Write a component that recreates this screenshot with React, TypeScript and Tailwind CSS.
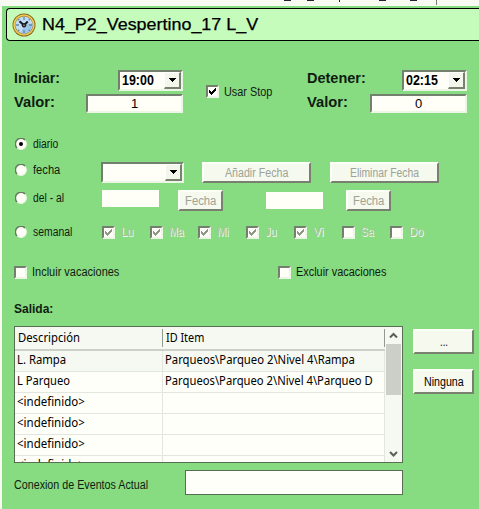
import { useLayoutEffect, useRef, useState } from "react";

/* Text condensed or widened to a given width. */
function Text({ children, width, className = "" }: { children: string; width: number; className?: string }) {
  const ref = useRef<HTMLSpanElement>(null);
  const [scale, setScale] = useState(1);
  useLayoutEffect(() => {
    if (ref.current) setScale(width / ref.current.offsetWidth);
  }, [children, width]);
  return (
    <span className={`block shrink-0 text-left ${className}`} style={{ width }}>
      <span ref={ref} className="inline-block origin-left whitespace-pre" style={{ transform: `scaleX(${scale})` }}>
        {children}
      </span>
    </span>
  );
}

const sunken =
  "border-t-2 border-l-2 border-b-2 border-r-2 border-t-[#74806e] border-l-[#74806e] border-b-[#ebf6e5] border-r-[#ebf6e5] bg-[#fffff8]";
const raised =
  "border-t-2 border-l-2 border-b-2 border-r-2 border-t-[#fbfff5] border-l-[#fbfff5] border-b-[#78806f] border-r-[#78806f] bg-[#f5f9ee]";

function Combo({ value, wide = false }: { value?: string; wide?: boolean }) {
  return (
    <div className={`flex h-[21px] shrink-0 items-stretch ${wide ? "w-[83px]" : "w-[65px]"} ${sunken}`}>
      <div className="flex flex-1 items-start pl-[2px] text-[14px] leading-4 font-bold text-black">
        {value && <Text width={32}>{value}</Text>}
      </div>
      <div className="flex w-[17px] items-center justify-center border-t border-r-2 border-b-2 border-l border-t-white border-r-[#78806f] border-b-[#78806f] border-l-white bg-[#f2f6eb]">
        <svg width="7" height="4" viewBox="0 0 7 4" shapeRendering="crispEdges">
          <path d="M0 0h7v1H6v1H5v1H4v1H3V3H2V2H1V1H0z" />
        </svg>
      </div>
    </div>
  );
}

function Check({ checked = false, disabled = false }: { checked?: boolean; disabled?: boolean }) {
  return (
    <div className={`flex size-[13px] shrink-0 items-center justify-center ${sunken}`}>
      {checked && (
        <svg width="9" height="9" viewBox="0 0 9 9" className={disabled ? "text-[#92998c]" : "text-black"} shapeRendering="crispEdges">
          <path d="M1 3h1v1h1v1h1V4h1V3h1V2h1V1h1v3H7v1H6v1H5v1H4v1H3V7H2V6H1z" fill="currentColor" />
        </svg>
      )}
    </div>
  );
}

function Radio({ label, width, checked = false, className = "" }: { label: string; width: number; checked?: boolean; className?: string }) {
  return (
    <div className={`flex w-[86px] shrink-0 items-center gap-[6px] ${className}`}>
      <svg width="12" height="12" viewBox="0 0 12 12" className="shrink-0">
        <circle cx="6" cy="6" r="5.3" fill="#fffff8" stroke="#eef8e9" strokeWidth="1.2" />
        <path d="M2 10A5.3 5.3 0 0 1 10 2" fill="none" stroke="#66785f" strokeWidth="1.5" />
        {checked && <circle cx="6" cy="6" r="2" />}
      </svg>
      <Text width={width} className="text-[12px] leading-4">{label}</Text>
    </div>
  );
}

function Button({ label, width, className }: { label: string; width: number; className: string }) {
  return (
    <button className={`flex shrink-0 items-center justify-center ${raised} ${className}`}>
      <Text width={width}>{label}</Text>
    </button>
  );
}

function Clock() {
  return (
    <svg width="24" height="24" viewBox="0 0 24 24" className="shrink-0">
      <circle cx="12" cy="12" r="11.5" fill="#8a671e" />
      <circle cx="12" cy="12" r="10.6" fill="#f0ce54" />
      <circle cx="12" cy="12" r="9.2" fill="#a3853b" />
      <circle cx="12" cy="12" r="8.6" fill="#c1ddf4" />
      <path d="M12 12 20.2 10A8.5 8.5 0 0 1 9 20z" fill="#9bc6eb" />
      <path d="M12 4v3m0 10v3M4 12h3m10 0h3M6.3 6.3l1 1m9.4 9.4 1 1m0-11.4-1 1m-9.4 9.4-1 1" stroke="#6286a7" strokeWidth="1.3" />
      <path d="M7.5 8.2 12 12.2l3.8-3.7" fill="none" stroke="#172130" strokeWidth="2.2" />
      <circle cx="12" cy="12.3" r="2.2" fill="#172130" />
      <circle cx="12" cy="12.3" r=".8" fill="#e9a344" />
    </svg>
  );
}

const days = [
  { name: "Lu", on: true, width: 12 },
  { name: "Ma", on: true, width: 15 },
  { name: "Mi", on: true, width: 12 },
  { name: "Ju", on: true, width: 12 },
  { name: "Vi", on: true, width: 10 },
  { name: "Sa", on: false, width: 13 },
  { name: "Do", on: false, width: 14 },
];

const rows = [
  { name: "L. Rampa", nameWidth: 49, id: "Parqueos\\Parqueo 2\\Nivel 4\\Rampa", idWidth: 190 },
  { name: "L Parqueo", nameWidth: 53, id: "Parqueos\\Parqueo 2\\Nivel 4\\Parqueo D", idWidth: 208 },
  { name: "<indefinido>", nameWidth: 68 },
  { name: "<indefinido>", nameWidth: 68 },
  { name: "<indefinido>", nameWidth: 68 },
  { name: "<indefinido>", nameWidth: 68 },
];

function ValueGroup({ title, titleWidth, time, value, className }: { title: string; titleWidth: number; time: string; value: string; className: string }) {
  return (
    <div className={`shrink-0 ${className}`}>
      <div className="flex h-6 justify-between">
        <Text width={titleWidth} className="-mt-px text-[14px] leading-[18px] font-bold">{title}</Text>
        <Combo value={time} />
      </div>
      <div className="flex h-[19px] justify-between">
        <Text width={41} className="-mt-px text-[14px] leading-[18px] font-bold">Valor:</Text>
        <div className={`flex w-[97px] items-center justify-center text-[13px] leading-4 text-black ${sunken}`}>{value}</div>
      </div>
    </div>
  );
}

export default function App() {
  return (
    <div className="flex h-[509px] w-[479px] flex-col overflow-hidden bg-[#f9faf2] pl-[2px] font-['Liberation_Sans',Arial,sans-serif] text-[12px] leading-4 text-[#101c10]">
      <div className="flex h-[6px] shrink-0 items-start">
        <div className="ml-[282px] h-px w-[7px] bg-[#24212f]" />
        <div className="ml-4 h-px w-[7px] bg-[#24212f]" />
        <div className="ml-[25px] h-[2px] w-px bg-[#24212f]" />
        <div className="ml-[39px] h-px w-[7px] bg-[#24212f]" />
        <div className="ml-6 h-px w-[7px] bg-[#24212f]" />
        <div className="ml-[19px] h-[5px] w-px bg-[#777b74]" />
      </div>

      <main className="flex flex-1 flex-col bg-[#87db81]">
        <header className="mt-[2px] ml-1 flex h-[33px] shrink-0 items-center gap-[6px] rounded-l-[4px] border-y border-l border-black bg-[#c5fbbb] pl-[5px] text-black">
          <Clock />
          <Text width={216} className="text-[17px] leading-5 [-webkit-text-stroke:0.25px_black]">N4_P2_Vespertino_17 L_V</Text>
        </header>

        <section className="mt-[29px] flex h-[43px] shrink-0 pl-3">
          <ValueGroup title="Iniciar:" titleWidth={46} time="19:00" value="1" className="w-[169px]" />
          <div className="ml-[23px] flex h-[43px] w-[92px] items-center gap-[5px]">
            <Check checked />
            <Text width={48}>Usar Stop</Text>
          </div>
          <ValueGroup title="Detener:" titleWidth={59} time="02:15" value="0" className="ml-[9px] w-[160px]" />
        </section>

        <section className="mt-[22px] shrink-0 pl-[13px]">
          <div className="flex h-[17px] items-center"><Radio label="diario" width={25} checked /></div>
          <div className="mt-[10px] flex h-[21px] items-center">
            <Radio label="fecha" width={27} className="mb-[5px]" />
            <Combo wide />
            <Button label="Añadir Fecha" width={63} className="ml-[18px] h-[21px] w-[109px] text-[#9ca296]" />
            <Button label="Eliminar Fecha" width={69} className="ml-[19px] h-[21px] w-[109px] text-[#9ca296]" />
          </div>
          <div className="mt-[7px] flex h-[21px] items-start">
            <Radio label="del - al" width={31} />
            <div className="ml-px h-[17px] w-[57px] bg-[#fffff8]" />
            <Button label="Fecha" width={31} className="ml-[19px] h-[21px] w-[45px] text-[#9ca296]" />
            <div className="mt-[2px] ml-[43px] h-[17px] w-[57px] bg-[#fffff8]" />
            <Button label="Fecha" width={31} className="ml-[23px] h-[21px] w-[45px] text-[#9ca296]" />
          </div>
          <div className="mt-[13px] flex h-4 items-center">
            <Radio label="semanal" width={39} />
            <div className="ml-px flex">
              {days.map((day) => (
                <div key={day.name} className="flex w-12 items-center gap-[6px]">
                  <Check checked={day.on} disabled />
                  <Text width={day.width} className="text-[#a9c49f] [text-shadow:1px_1px_0_#effbe8]">{day.name}</Text>
                </div>
              ))}
            </div>
          </div>
        </section>

        <section className="mt-6 flex h-4 shrink-0 items-center pl-3">
          <div className="flex w-[264px] items-center gap-[5px]"><Check /><Text width={87}>Incluir vacaciones</Text></div>
          <div className="flex items-center gap-[5px]"><Check /><Text width={90}>Excluir vacaciones</Text></div>
        </section>
        <h2 className="mt-[21px] flex h-4 shrink-0 items-center pl-3 font-bold"><Text width={39}>Salida:</Text></h2>

        <section className="mt-[9px] flex h-[137px] shrink-0 pl-3">
          <div className="flex h-[137px] w-[389px] shrink-0 overflow-hidden border border-[#596c54] bg-[#fffff9] font-['Noto_Sans',sans-serif] text-black">
            <div className="w-[370px] shrink-0 overflow-hidden">
              <div className="flex h-[24px] items-start border-b-2 border-[#ccd1c7] bg-[#f5f9f1] pt-[2px]">
                <div className="flex h-[18px] w-[148px] items-center border-r border-[#92998d] pl-[3px]"><Text width={62}>Descripción</Text></div>
                <div className="flex h-[18px] w-[222px] items-center border-r border-[#92998d] pl-[3px]"><Text width={38}>ID Item</Text></div>
              </div>
              {rows.map((row, i) => (
                <div key={i} className={`flex h-[21px] border-b border-[#e2e6de] ${i === 0 ? "bg-[#f6f9f2]" : ""}`}>
                  <div className="w-[148px] border-r border-[#e2e6de] pt-px pl-[2px]"><Text width={row.nameWidth}>{row.name}</Text></div>
                  <div className="w-[222px] border-r border-[#e2e6de] pt-px pl-[2px]">{row.id && <Text width={row.idWidth}>{row.id}</Text>}</div>
                </div>
              ))}
            </div>
            <div className="flex flex-1 flex-col items-center bg-[#f5f9f2]">
              <svg width="15" height="17" viewBox="0 0 15 17" className="shrink-0"><path d="m4 10.5 3.5-3.5 3.5 3.5" fill="none" stroke="#596056" strokeWidth="2" /></svg>
              <div className="h-[51px] w-[15px] shrink-0 bg-[#cbcfc7]" />
              <svg width="15" height="17" viewBox="0 0 15 17" className="mt-auto shrink-0"><path d="m4 7 3.5 3.5L11 7" fill="none" stroke="#596056" strokeWidth="2" /></svg>
            </div>
          </div>
          <div className="ml-[10px] flex flex-col gap-[15px] pt-[3px]">
            <Button label="..." width={8} className="h-[25px] w-[61px] text-black" />
            <Button label="Ninguna" width={40} className="h-[25px] w-[61px] text-black" />
          </div>
        </section>

        <footer className="mt-[7px] flex h-[25px] shrink-0 items-center pl-3">
          <div className="w-[171px] pt-[5px]"><Text width={134}>Conexion de Eventos Actual</Text></div>
          <div className="h-[25px] w-[218px] border border-[#596c54] bg-[#fffff9]" />
        </footer>
      </main>
    </div>
  );
}
